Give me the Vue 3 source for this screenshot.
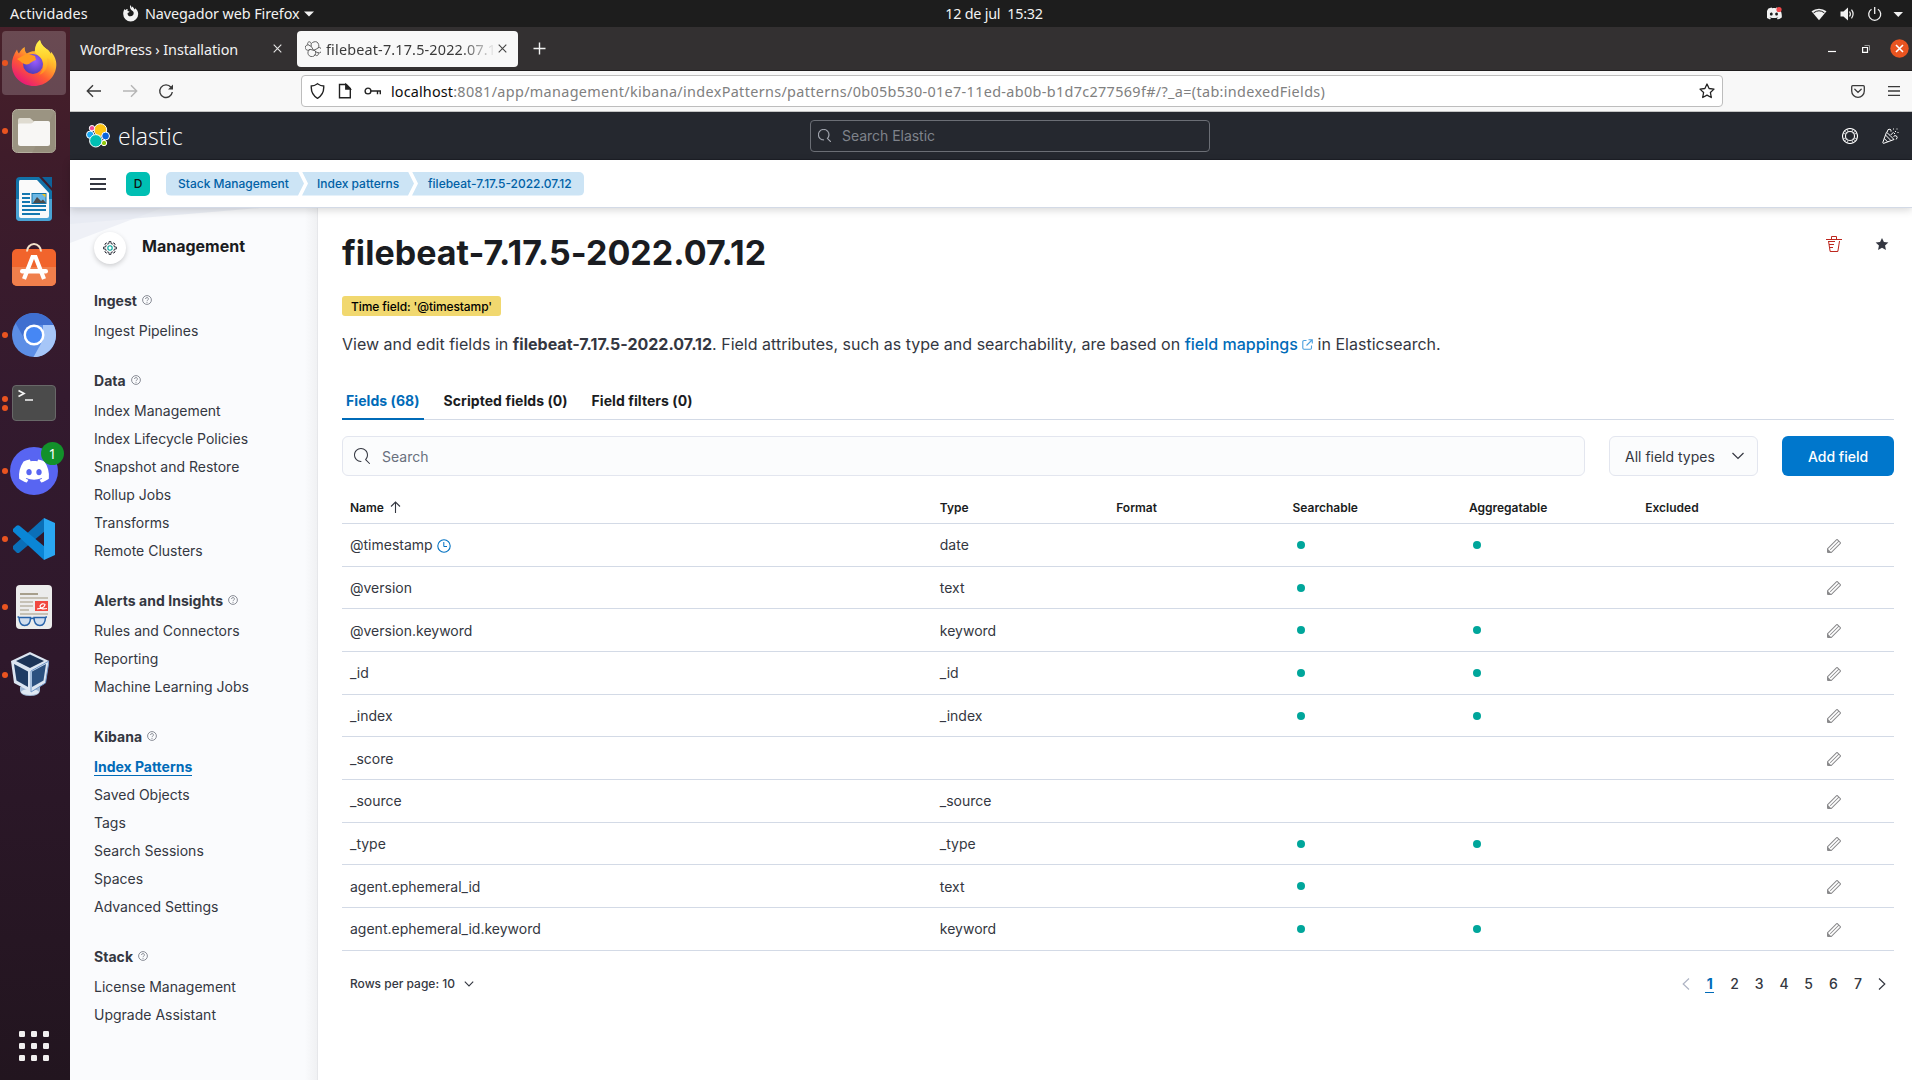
<script setup>
const navGroups = [
  { title: 'Ingest', items: ['Ingest Pipelines'] },
  {
    title: 'Data',
    items: ['Index Management', 'Index Lifecycle Policies', 'Snapshot and Restore', 'Rollup Jobs', 'Transforms', 'Remote Clusters'],
  },
  { title: 'Alerts and Insights', items: ['Rules and Connectors', 'Reporting', 'Machine Learning Jobs'] },
  {
    title: 'Kibana',
    items: ['Index Patterns', 'Saved Objects', 'Tags', 'Search Sessions', 'Spaces', 'Advanced Settings'],
  },
  { title: 'Stack', items: ['License Management', 'Upgrade Assistant'] },
]
const activeItem = 'Index Patterns'

const columns = ['Type', 'Format', 'Searchable', 'Aggregatable', 'Excluded']
const fields = [
  { name: '@timestamp', type: 'date', s: true, a: true, time: true },
  { name: '@version', type: 'text', s: true, a: false },
  { name: '@version.keyword', type: 'keyword', s: true, a: true },
  { name: '_id', type: '_id', s: true, a: true },
  { name: '_index', type: '_index', s: true, a: true },
  { name: '_score', type: '', s: false, a: false },
  { name: '_source', type: '_source', s: false, a: false },
  { name: '_type', type: '_type', s: true, a: true },
  { name: 'agent.ephemeral_id', type: 'text', s: true, a: false },
  { name: 'agent.ephemeral_id.keyword', type: 'keyword', s: true, a: true },
]
const pages = [1, 2, 3, 4, 5, 6, 7]

const searchPath =
  'M11.271 11.978l3.872 3.873a.502.502 0 00.708 0 .502.502 0 000-.708l-3.565-3.564c2.38-2.747 2.267-6.923-.342-9.532-2.73-2.73-7.17-2.73-9.898 0-2.728 2.729-2.728 7.17 0 9.9a6.955 6.955 0 004.949 2.05.5.5 0 000-1 5.96 5.96 0 01-4.242-1.757 6.01 6.01 0 010-8.486 6.004 6.004 0 018.484 0 6.01 6.01 0 010 8.486.5.5 0 00.034.738z'
const pencilPath =
  'M12.148 3.148L11 2l-9 9v3h3l9-9-1.144-1.144-8.002 7.998a.502.502 0 01-.708 0 .502.502 0 010-.708l8.002-7.998zM11 1c.256 0 .512.098.707.293l3 3a.999.999 0 010 1.414l-9 9A.997.997 0 015 15H2a1 1 0 01-1-1v-3c0-.265.105-.52.293-.707l9-9A.997.997 0 0111 1zM5 14H2v-3l3 3z'
const trashPath =
  'M11 3h5v1H0V3h5V1a1 1 0 011-1h4a1 1 0 011 1v2zm-7.056 8H7v1H4.1l.392 2.519c.042.269.254.458.493.458h6.03c.239 0 .451-.189.493-.458l1.498-9.576H14l-1.504 9.73c-.116.747-.74 1.304-1.481 1.304h-6.03c-.741 0-1.365-.557-1.481-1.304l-1.511-9.73H9V5.95H3.157L3.476 8H8v1H3.632l.312 2zM6 3h4V1H6v2z'
const discordPath =
  'M20.317 4.3698a19.7913 19.7913 0 00-4.8851-1.5152.0741.0741 0 00-.0785.0371c-.211.3753-.4447.8648-.6083 1.2495-1.8447-.2762-3.68-.2762-5.4868 0-.1636-.3933-.4058-.8742-.6177-1.2495a.077.077 0 00-.0785-.037 19.7363 19.7363 0 00-4.8852 1.515.0699.0699 0 00-.0321.0277C.5334 9.0458-.319 13.5799.0992 18.0578a.0824.0824 0 00.0312.0561c2.0528 1.5076 4.0413 2.4228 5.9929 3.0294a.0777.0777 0 00.0842-.0276c.4616-.6304.8731-1.2952 1.226-1.9942a.076.076 0 00-.0416-.1057c-.6528-.2476-1.2743-.5495-1.8722-.8923a.077.077 0 01-.0076-.1277c.1258-.0943.2517-.1923.3718-.2914a.0743.0743 0 01.0776-.0105c3.9278 1.7933 8.18 1.7933 12.0614 0a.0739.0739 0 01.0785.0095c.1202.099.246.1981.3728.2924a.077.077 0 01-.0066.1276 12.2986 12.2986 0 01-1.873.8914.0766.0766 0 00-.0407.1067c.3604.698.7719 1.3628 1.225 1.9932a.076.076 0 00.0842.0286c1.961-.6067 3.9495-1.5219 6.0023-3.0294a.077.077 0 00.0313-.0552c.5004-5.177-.8382-9.6739-3.5485-13.6604a.061.061 0 00-.0312-.0286zM8.02 15.3312c-1.1825 0-2.1569-1.0857-2.1569-2.419 0-1.3332.9555-2.4189 2.157-2.4189 1.2108 0 2.1757 1.0952 2.1568 2.419 0 1.3332-.9555 2.4189-2.1569 2.4189zm7.9748 0c-1.1825 0-2.1569-1.0857-2.1569-2.419 0-1.3332.9554-2.4189 2.1569-2.4189 1.2108 0 2.1757 1.0952 2.1568 2.419 0 1.3332-.946 2.4189-2.1568 2.4189Z'
</script>

<template>
  <div class="screen">
    <header class="topbar">
      <div class="topbar-left">
        <span class="t-act">Actividades</span>
        <svg class="t-fox" width="17" height="17" viewBox="0 0 17 17">
          <path fill="#f2f2f2" d="M8.2 0c.9.8 1.4 1.9 1.4 3 .4-.5.5-1 .4-1.6 1.3.7 2 1.8 2.3 3 .5-.2.9-.7 1-1.2 1.800 1.400 2.900 3.400 2.900 5.700a7.500 7.500 0 0 1-15 0C1.200 6.900 1.700 5.200 2.600 4c.2.500.5.900.9 1.100C4 4.400 4.900 4 5.700 4.100c-.4.700-.3 1.300 0 1.800l1.900.5c-.2.900-1.200 1.200-2 1.500-.3 2 1 3.400 2.900 3.400 2 0 3.300-1.500 3.200-3.300-.1-1.200-.8-2-1.800-2.600C8.400 4.400 7.500 2.600 8.200 0z" />
        </svg>
        <span class="t-app">Navegador web Firefox</span>
        <svg width="10" height="6" viewBox="0 0 10 6"><path d="M0 .5h10L5 5.500z" fill="#f2f2f2" /></svg>
      </div>
      <span class="t-clock">12 de jul&nbsp; 15:32</span>
      <svg class="t-tray" width="142" height="20" viewBox="0 0 142 20">
        <g transform="translate(-1 1.500) scale(.66)"><path :d="discordPath" fill="#f2f2f2" /></g>
        <circle cx="12" cy="5.500" r="2.600" fill="#f0474a" />
        <path d="M44.500 7.300a12 12 0 0 1 15 0L52 16.300z" fill="#f2f2f2" />
        <path d="M46.600 8.800a9 9 0 0 1 10.800 0" stroke="#1d1d1d" stroke-width="1" fill="none" />
        <path d="M73.500 7.500h3L81 3.500v13l-4.500-4h-3z" fill="#f2f2f2" />
        <path d="M82.500 7.500q1.800 2.500 0 5M84.500 5.700q3.200 4.300 0 8.600" fill="none" stroke="#f2f2f2" stroke-width="1.200" />
        <path d="M104.500 5.200a6 6 0 1 0 6.400 0M107.700 3v7" fill="none" stroke="#f2f2f2" stroke-width="1.300" />
        <path d="M126.500 8h9.500l-4.750 5z" fill="#f2f2f2" />
      </svg>
    </header>

    <div class="desktop">
      <aside class="dock">
        <div class="slot">
          <div class="tile">
            <svg width="46" height="48" viewBox="0 0 46 48">
              <defs>
                <linearGradient id="ffBody" x1=".85" y1=".1" x2=".25" y2="1">
                  <stop offset="0" stop-color="#fff14a" /><stop offset=".32" stop-color="#ffb22c" />
                  <stop offset=".62" stop-color="#ff5a33" /><stop offset="1" stop-color="#e6127f" />
                </linearGradient>
                <radialGradient id="ffGlobe" cx=".6" cy=".35" r=".7">
                  <stop offset="0" stop-color="#9a5cff" /><stop offset="1" stop-color="#4a3bb4" />
                </radialGradient>
                <linearGradient id="ffTail" x1=".5" y1="0" x2=".5" y2="1">
                  <stop offset="0" stop-color="#fff44f" /><stop offset=".5" stop-color="#ffd02d" /><stop offset="1" stop-color="#ff8a1f" />
                </linearGradient>
              </defs>
              <path fill="url(#ffBody)" d="M29 1c1 5 5 8 8 10 1.500 1.500 2.300 3 2.800 4.500.3-1 .2-2 0-3C44 17 45.500 22 45.300 26 45 38 35 47 23 47S1 38 .8 26C.8 20 3 15 6 10.500c.3 1.500 1 3 2 4C9 12 11 9.500 13.800 8c-.3 2.500.4 5 2 6.600C20 12 22 12.500 24 12c0-4 2-8 5-11z" />
              <circle cx="22" cy="25" r="10" fill="url(#ffGlobe)" />
              <path fill="url(#ffTail)" d="M29 1c1 5 5 8 8 10 5 5 6 11 5 17-1-5-3-8-6-9 2 9-2 15-8 17 5-5 6-12 2-17-3-4-7-4-6-9 .5-4 2-7 5-9z" />
              <path fill="#ff9a22" d="M6 20c4-2 7-4 10-5.500 2 1 5 1.500 8 2.500l1 4c-3 1-5 2-7 4-3 1-6 0-9-3z" />
            </svg>
          </div>
          <i class="dot"></i>
        </div>
        <div class="slot">
          <svg width="44" height="44" viewBox="0 0 44 44">
            <rect x=".5" y=".5" width="43" height="43" rx="5" fill="#9b9482" stroke="#b5af9f" />
            <path d="M44 0v39a5 5 0 0 1-5 5H20z" fill="#8c8573" opacity=".35" />
            <path d="M6 11q0-2 2-2h10l4 3.500h14q2 0 2 2V20H6z" fill="#dfdbd0" />
            <rect x="6" y="15" width="32" height="22" rx="2.500" fill="#f8f7f5" />
            <path d="M6 18v-2q0-1.500 1.500-1.500h11q1.500 0 2.500-1l1.500-1.500H36q2 0 2 2v5z" fill="#f8f7f5" />
          </svg>
          <i class="dot"></i>
        </div>
        <div class="slot">
          <svg width="36" height="44" viewBox="0 0 36 44">
            <path d="M4 0h19l13 14v26a4 4 0 0 1-4 4H4a4 4 0 0 1-4-4V4a4 4 0 0 1 4-4z" fill="#1272a8" />
            <path d="M0 22h36v18a4 4 0 0 1-4 4H4a4 4 0 0 1-4-4z" fill="#4aa3d4" />
            <path d="M4 3h17l12 13v23q0 2-2 2H5q-2 0-2-2V5q0-2 1-2z" fill="#fafafa" />
            <path d="M26 0h10v11z" fill="#0e629a" />
            <path d="M6 17h8M6 21h8M6 25h8M6 29h24M6 33h24M6 37h18" stroke="#1578b0" stroke-width="2" />
            <rect x="16" y="16.500" width="14" height="10" fill="#6cb7e4" stroke="#1272a8" />
            <path d="M17 26l4-6 4 4 2-1.500 3 3.500z" fill="#4b4b4b" /><path d="M26 17h3.500v3.500z" fill="#f5c518" />
          </svg>
        </div>
        <div class="slot">
          <svg class="store" width="44" height="44" viewBox="0 0 44 44">
            <rect y="7" width="44" height="37" rx="5" fill="#f1642c" />
            <path d="M0 25h44v14a5 5 0 0 1-5 5H5a5 5 0 0 1-5-5z" fill="#f07f4c" />
            <path d="M15 9.500a7 7.500 0 0 1 14 0" fill="none" stroke="#f4e3cb" stroke-width="2" />
            <path d="M12 37l8.500-22h3L32 37" fill="none" stroke="#fff" stroke-width="4.200" />
            <rect x="8" y="27" width="28" height="4.500" rx="2.200" fill="#fff" />
          </svg>
        </div>
        <div class="slot">
          <svg width="44" height="44" viewBox="0 0 44 44">
            <circle cx="22" cy="22" r="22" fill="#5c8ee6" />
            <path d="M22 12h19.600A22 22 0 0 0 3.500 10.100L13 27z" fill="#3f6fd0" />
            <path d="M31 12h10.600A22 22 0 0 1 21.500 44L31 27z" fill="#a6c6f8" />
            <circle cx="22" cy="22" r="10.500" fill="#fff" /><circle cx="22" cy="22" r="8" fill="#4687f4" />
          </svg>
          <i class="dot"></i>
        </div>
        <div class="slot">
          <svg width="44" height="36" viewBox="0 0 44 36">
            <rect x=".5" y=".5" width="43" height="35" rx="3.500" fill="#4b4b4b" stroke="#686868" />
            <path d="M6.500 5.500l5.500 3-5.500 3M13 15h8" fill="none" stroke="#f5f5f5" stroke-width="1.700" />
          </svg>
          <i class="dot dot-up"></i><i class="dot dot-down"></i>
        </div>
        <div class="slot">
          <svg width="48" height="48" viewBox="0 0 48 48">
            <circle cx="24" cy="24" r="24" fill="#5865f2" />
            <g transform="translate(9 9) scale(1.250)"><path :d="discordPath" fill="#fff" /></g>
          </svg>
          <i class="dot"></i><span class="badge">1</span>
        </div>
        <div class="slot">
          <svg width="42" height="42" viewBox="0 0 42 42">
            <path d="M31 0L0 28l0 3 3.500 3.500q1.500 1 3 0L32 13z" fill="#0a6fb8" />
            <path d="M31 42L0 13.500V11l3.500-3.200q1.500-1 3 0L32 29z" fill="#0a86d6" />
            <path d="M31 0l11 5v32l-11 5z" fill="#2aa7f2" />
          </svg>
          <i class="dot"></i>
        </div>
        <div class="slot">
          <svg width="36" height="44" viewBox="0 0 36 44">
            <rect width="36" height="44" rx="4" fill="#ececec" />
            <path d="M4 9h18" stroke="#a79f8c" stroke-width="2" />
            <path d="M4 13h28M4 17h13M4 21h13M4 25h9M4 29h28" stroke="#b9b3a3" stroke-width="1.700" />
            <rect x="19" y="16" width="13" height="10" fill="#f1483f" />
            <path d="M21 24q8-1 8-4.500-3-2-5 1.500 0 4 7 2.500" fill="none" stroke="#fff" stroke-width="1.200" />
            <path d="M3 32.500h11.500q0 8-6 8-5 0-5.500-8zM18 32.500h11.500q-.5 8-5.500 8-6 0-6-8zM14.500 34q1.800-1.500 3.500 0M1.500 32H3M29.500 32H31" fill="#c4d7ef" fill-opacity=".7" stroke="#2862a8" stroke-width="1.500" />
          </svg>
          <i class="dot"></i>
        </div>
        <div class="slot">
          <svg class="vbox" width="38" height="46" viewBox="0 0 38 46">
            <path d="M9 36l10-3 10 3v4q-1 5-10 5T9 40z" fill="#9fb6d2" /><ellipse cx="19" cy="41" rx="9" ry="3" fill="#dfe9f4" />
            <path d="M19 1l19 9-3.500 22L20 41 3 32 0 10z" fill="#dbe5f1" />
            <path d="M19 3.500l14 6.500-14 7-14-7z" fill="#1c3558" />
            <path d="M3 13l14 7.500v15.500L5.500 29.500z" fill="#1f3c63" />
            <path d="M35 13l-14 7.500v15.500l11.500-6.500z" fill="#2b5180" />
            <path d="M38 10l-3.500 22L20 41V20z" fill="none" stroke="#6f97c9" />
          </svg>
          <i class="dot"></i>
        </div>
        <svg class="apps" width="30" height="30" viewBox="0 0 30 30">
          <g fill="#f2f0f0">
            <template v-for="r in 3" :key="r">
              <rect v-for="c in 3" :key="c" :x="(c - 1) * 12" :y="(r - 1) * 12" width="6" height="6" rx="1.200" />
            </template>
          </g>
        </svg>
      </aside>

      <section class="window">
        <div class="tabbar">
          <div class="tab">
            <span class="tab1-text">WordPress › Installation</span>
            <svg width="9" height="9" viewBox="0 0 9 9"><path d="M.7.7l7.600 7.600M8.300.7L.7 8.300" stroke="#e6e6e6" stroke-width="1.100" /></svg>
          </div>
          <div class="tab on">
            <svg width="16" height="16" viewBox="0 0 16 16" fill="none" stroke="#555" stroke-width=".9">
              <path d="M6.300 5.500A3.800 3.800 0 1 1 11 8.200L8.600 9.300zM10 9.500A3.900 3.900 0 1 1 5 8.300l3.600 1z" />
              <path d="M5 8.300A2.700 2.700 0 1 1 3.300 3.900l3 1.600M3.300 3.900A1.700 1.700 0 1 1 6 2.500M12.500 7a2.700 2.700 0 1 1 .3 4.600L10 10.500M12.800 11.600A1.700 1.700 0 1 1 10 13" />
            </svg>
            <span class="tab2-text">filebeat-7.17.5-2022.07.12</span>
            <svg class="tab-x" width="9" height="9" viewBox="0 0 9 9"><path d="M.7.7l7.600 7.600M8.300.7L.7 8.300" stroke="#444" stroke-width="1.100" /></svg>
          </div>
          <svg class="plus" width="13" height="13" viewBox="0 0 13 13"><path d="M6.500.5v12M.5 6.500h12" stroke="#f2f2f2" stroke-width="1.400" /></svg>
          <div class="winbtns">
            <svg width="8" height="14" viewBox="0 0 8 14"><path d="M0 9.500h8" stroke="#fff" stroke-width="1.200" /></svg>
            <svg width="8" height="8" viewBox="0 0 8 8"><path d="M.6 2.500h4.900v4.900H.6z" fill="none" stroke="#fff" stroke-width="1.200" /><path d="M2.500.5h5v5" fill="none" stroke="#9a9a9a" /></svg>
            <svg width="19" height="19" viewBox="0 0 19 19"><circle cx="9.500" cy="9.500" r="9.200" fill="#e95420" /><path d="M6 6l7 7M13 6l-7 7" stroke="#fff" stroke-width="1.600" /></svg>
          </div>
        </div>

        <div class="toolbar">
          <svg class="navbtns" width="90" height="16" viewBox="0 0 90 16" fill="none" stroke-width="1.400">
            <path d="M15 8H1.500M7 2.300L1.300 8 7 13.700" stroke="#3a3a3a" />
            <path d="M37 8h13.500M45 2.300L50.700 8 45 13.700" stroke="#b5b5b5" />
            <path d="M85 4.300A6.300 6.300 0 1 0 86.300 9" stroke="#3a3a3a" /><path d="M87 1.500v5h-5z" fill="#3a3a3a" stroke="none" />
          </svg>
          <div class="urlbar">
            <svg width="72" height="18" viewBox="0 0 72 18" fill="none" stroke="#222" stroke-width="1.400">
              <path d="M7.500 1.700q3.200 2.300 6.200 2.300.6 8.500-6.200 12.300Q.7 12.500 1.300 4q3 0 6.200-2.300z" />
              <path d="M29.500 2.500h6.800l4 4v9.300H29.500z" /><path d="M35.800 2.500V7h4.500z" fill="#222" />
              <circle cx="58" cy="9" r="2.900" /><path d="M61 9h10M67.500 9v3.200M70.300 9v3.200" />
            </svg>
            <span class="url"><b>localhost</b>:8081/app/management/kibana/indexPatterns/patterns/0b05b530-01e7-11ed-ab0b-b1d7c277569f#/?_a=(tab:indexedFields)</span>
            <svg class="bookmark" width="16" height="16" viewBox="0 0 16 16"><path d="M8 1l2.100 4.500 4.900.6-3.600 3.400.9 5L8 12.100 3.700 14.500l.9-5L1 6.100l4.900-.6z" fill="none" stroke="#222" stroke-width="1.300" stroke-linejoin="round" /></svg>
          </div>
          <svg class="pocket" width="14" height="13" viewBox="0 0 14 13" fill="none" stroke="#3a3a3a" stroke-width="1.300"><path d="M1.700.7h10.600q1 0 1 1V6a6.300 6.300 0 0 1-12.600 0V1.700q0-1 1-1z" /><path d="M3.800 4.300L7 7.400l3.200-3.100" stroke-linecap="round" /></svg>
          <svg class="menu" width="12" height="10" viewBox="0 0 12 10"><path d="M0 .7h12M0 5h12M0 9.300h12" stroke="#3a3a3a" stroke-width="1.300" /></svg>
        </div>

        <div class="elastic-bar">
          <svg width="24" height="25" viewBox="0 0 24 25" stroke="#fff" stroke-width="1">
            <circle cx="14.400" cy="7" r="6.300" fill="#fec514" /><circle cx="6" cy="5.200" r="2.700" fill="#f04e98" />
            <circle cx="4.200" cy="11.700" r="3.700" fill="#1ba9f5" /><circle cx="19.600" cy="13" r="3.900" fill="#0b64dd" />
            <circle cx="18" cy="20" r="2.700" fill="#93c90e" /><circle cx="9.800" cy="17.800" r="6.200" fill="#00bfb3" />
          </svg>
          <span class="wordmark">elastic</span>
          <div class="gsearch">
            <svg width="13" height="13" viewBox="0 0 16 16"><path :d="searchPath" fill="#b0b4bd" stroke="#b0b4bd" stroke-width=".3" /></svg>
            <span>Search Elastic</span>
          </div>
          <svg class="help" width="16" height="16" viewBox="0 0 16 16" fill="none" stroke="#fff">
            <circle cx="8" cy="8" r="7.500" stroke-width="1.100" /><circle cx="8" cy="8" r="4.500" stroke-width="1.100" />
            <path d="M5.300 1.200L6 4M2.700 3.200l2.600 2M1.200 5.300L4 6M10.700 1.200L10 4M13.300 3.200l-2.600 2M14.800 5.300L12 6M5.300 14.800L6 12M2.700 12.800l2.600-2M1.200 10.700L4 10M10.700 14.800L10 12M13.300 12.800l-2.600-2M14.800 10.700L12 10" stroke-width=".7" />
          </svg>
          <svg class="cheer" width="17" height="16" viewBox="0 0 17 16" fill="none" stroke="#fff">
            <path d="M4.500 4.200L.8 14.500q0 1 1 .8L12 11.500M4.500 4.200q3.500 3 7.500 7.300M3.500 7l5.500 5.600M2.300 10.500l3.500 3.600M5.200 4Q5.500.6 8 1.200q1.500.6 1 2.400M11.500 8.500q1.500-1.500 3-.5 1.500 1.500-.3 3.400M8.500 7.200l3-3" />
            <path d="M11 1h1M14.500 1h1M13 3.500h1M12 5.500h1M15.500 4.500h1" />
          </svg>
        </div>

        <div class="crumbbar">
          <svg width="16" height="12" viewBox="0 0 16 12"><path d="M0 1h16M0 6h16M0 11h16" stroke="#343741" stroke-width="1.800" /></svg>
          <span class="space">D</span>
          <nav class="crumbs">
            <span class="crumb c1">Stack Management</span>
            <span class="crumb c2">Index patterns</span>
            <span class="crumb c3">filebeat-7.17.5-2022.07.12</span>
          </nav>
        </div>

        <div class="page">
          <aside class="side">
            <svg class="side-bg" width="247" height="60" viewBox="0 0 247 60">
              <path d="M0 0h92L0 35z" fill="#eef0f6" /><path d="M0 0h190L0 16z" fill="#e6e9f2" fill-opacity=".75" />
            </svg>
            <div class="side-head">
              <span class="gear">
                <svg width="16" height="16" viewBox="0 0 16 16" fill="none">
                  <path stroke="#343741" d="M7 .6h2v1.900l1.400.6 1.400-1.300 1.400 1.400-1.300 1.400.6 1.400h1.900v2h-1.900l-.6 1.400 1.300 1.400-1.400 1.400-1.400-1.300-1.400.6v1.900H7v-1.900l-1.400-.6-1.400 1.300-1.400-1.400 1.300-1.400L3.500 8H1.600V6h1.900l.6-1.400-1.300-1.400 1.400-1.400 1.400 1.300L7 2.500z" transform="translate(0 1)" />
                  <circle cx="8" cy="8" r="2.200" stroke="#00a69b" stroke-width="1.100" />
                </svg>
              </span>
              <h2>Management</h2>
            </div>
            <div v-for="g in navGroups" :key="g.title" class="group">
              <h3>
                {{ g.title }}
                <svg width="10" height="10" viewBox="0 0 10 10" fill="none" stroke="#7c808a" stroke-width=".9"><circle cx="5" cy="5" r="4.400" /><path d="M3.600 4a1.400 1.400 0 1 1 2 1.200Q5 5.500 5 6.200M5 7v.9" /></svg>
              </h3>
              <a v-for="i in g.items" :key="i" :class="{ active: i === activeItem }"><span>{{ i }}</span></a>
            </div>
          </aside>

          <main class="main">
            <div class="title-row">
              <h1>filebeat-7.17.5-2022.07.12</h1>
              <svg class="trash" width="16" height="16" viewBox="0 0 16 16"><path :d="trashPath" fill="#bd271e" /></svg>
              <svg width="14" height="14" viewBox="0 0 16 16"><path d="M8 1l2.200 4.700 5.100.6-3.800 3.500 1 5.100L8 12.400l-4.500 2.500 1-5.100L.7 6.300l5.100-.6z" fill="#343741" /></svg>
            </div>
            <span class="time-badge">Time field: '@timestamp'</span>
            <p class="desc">
              View and edit fields in <b>filebeat-7.17.5-2022.07.12</b>. Field attributes, such as type and searchability, are based on
              <a>field mappings <svg width="11" height="11" viewBox="0 0 11 11" fill="none" stroke="#4a9fdd" stroke-width="1.100"><path d="M4.500 1.500H2q-1.200 0-1.200 1.200V9q0 1.200 1.200 1.200h6.300q1.200 0 1.200-1.200V6.500M6.500.7h3.800v3.800M10 1L4.500 6.500" /></svg></a>
              in Elasticsearch.
            </p>
            <div class="tabs">
              <span class="sel">Fields (68)</span><span>Scripted fields (0)</span><span>Field filters (0)</span>
            </div>
            <div class="controls">
              <div class="search">
                <svg width="16" height="16" viewBox="0 0 16 16"><path :d="searchPath" fill="#343741" /></svg>
                <span>Search</span>
              </div>
              <div class="select">
                <span>All field types</span>
                <svg width="12" height="8" viewBox="0 0 12 8"><path d="M.5 1l5.500 5.500L11.500 1" fill="none" stroke="#343741" stroke-width="1.200" /></svg>
              </div>
              <div class="add">Add field</div>
            </div>
            <div class="thead">
              <span>Name <svg width="11" height="12" viewBox="0 0 11 12"><path d="M5.500 12V1M1 5.500L5.500 1 10 5.500" fill="none" stroke="#343741" stroke-width="1.100" /></svg></span>
              <span v-for="c in columns" :key="c">{{ c }}</span>
            </div>
            <div class="tbody">
              <div v-for="f in fields" :key="f.name" class="row">
                <span>{{ f.name }}<svg v-if="f.time" class="clock" width="14" height="14" viewBox="0 0 14 14" fill="none" stroke="#0071c2"><circle cx="7" cy="7" r="6.200" stroke-width="1.100" /><path d="M6.800 3v4.500H10" /></svg></span>
                <span>{{ f.type }}</span>
                <span></span>
                <span><i v-if="f.s" class="ok"></i></span>
                <span><i v-if="f.a" class="ok"></i></span>
                <span></span>
                <span class="edit"><svg width="16" height="16" viewBox="0 0 16 16"><path :d="pencilPath" fill="#8a8a8c" /></svg></span>
              </div>
            </div>
            <div class="pager">
              <span class="rpp">Rows per page: 10</span>
              <svg width="10" height="6" viewBox="0 0 10 6"><path d="M.8.700L5 5 9.200.700" fill="none" stroke="#343741" stroke-width="1.100" /></svg>
              <div class="pages">
                <svg width="8" height="12" viewBox="0 0 8 12"><path d="M7 .5L1.200 6 7 11.500" fill="none" stroke="#aeb4c4" stroke-width="1.200" /></svg>
                <span v-for="p in pages" :key="p" :class="{ cur: p === 1 }">{{ p }}</span>
                <svg width="8" height="12" viewBox="0 0 8 12"><path d="M1 .5L6.800 6 1 11.500" fill="none" stroke="#343741" stroke-width="1.200" /></svg>
              </div>
            </div>
          </main>
        </div>
      </section>
    </div>
  </div>
</template>

<style>
body { margin: 0; overflow: hidden; }
</style>

<style scoped>
* { box-sizing: border-box; }
.screen { width: 1912px; height: 1080px; display: flex; flex-direction: column; overflow: hidden; font-family: Inter, "Liberation Sans", sans-serif; color: #343741; white-space: nowrap; }
svg { display: block; flex: none; }

/* desktop top bar */
.topbar { height: 27px; flex: none; background: #1d1d1d; color: #f2f2f2; display: grid; grid-template-columns: 1fr auto 1fr; align-items: center; font: 14.400px/26px "Noto Sans", "Open Sans", sans-serif; }
.topbar-left { display: flex; align-items: center; padding-left: 10px; }
.t-act { width: 112px; letter-spacing: .08px; }
.t-app { width: 155px; margin: 0 4px 0 6px; letter-spacing: -.1px; }
.t-clock { letter-spacing: -.25px; padding-left: 76px; }
.t-tray { justify-self: end; margin-right: 3px; }

.desktop { flex: 1; display: flex; min-height: 0; }

/* launcher */
.dock { width: 70px; flex: none; display: flex; flex-direction: column; align-items: center; padding: 2px 2px 19px 0; background: linear-gradient(#48202a 0, #3f1c2a 12%, #331a2e 35%, #2e182b 60%, #22151f 100%); }
.slot { width: 68px; height: 68px; display: flex; align-items: center; justify-content: center; position: relative; flex: none; }
.tile { width: 60px; height: 64px; border-radius: 4px; background: rgba(255, 255, 255, .19); display: flex; align-items: center; justify-content: center; width: 64px; }
.dot { position: absolute; left: 2px; top: 31px; width: 6px; height: 6px; border-radius: 50%; background: #e95420; }
.dot-up { top: 27px; }
.dot-down { top: 36px; }
.badge { position: absolute; left: 41px; top: 5px; width: 23px; height: 23px; border-radius: 50%; background: #12912a; color: #fff; font: 14px/23px "Noto Sans", sans-serif; text-align: center; }
.store { margin-top: -6px; }
.vbox { margin: -2px 0 0 -8px; }
.apps { margin-top: auto; }

/* browser chrome */
.window { flex: 1; min-width: 0; display: flex; flex-direction: column; background: #fff; }
.tabbar { height: 44px; flex: none; background: #333031; border-bottom: 1px solid #1f1d1e; display: flex; align-items: center; font: 14.400px/20px "Noto Sans", "Open Sans", sans-serif; color: #f2f2f2; }
.tab { display: flex; align-items: center; width: 227px; padding-left: 10px; }
.tab1-text { width: 193px; padding-top: 2px; letter-spacing: -.1px; }
.tab.on { width: 221px; height: 36px; border-radius: 4px; background: #f8f8f8; color: #3a3a3a; padding-left: 8px; }
.tab2-text { width: 172px; padding-top: 2px; overflow: hidden; margin-left: 5px; letter-spacing: .17px; -webkit-mask-image: linear-gradient(90deg, #000 78%, transparent 99%); mask-image: linear-gradient(90deg, #000 78%, transparent 99%); }
.plus { margin-left: 15px; }
.winbtns { margin-left: auto; display: flex; align-items: center; gap: 26px; padding-right: 3px; }
.winbtns svg:last-child { margin-left: -6px; }
.toolbar { height: 41px; flex: none; background: #f8f8f8; border-bottom: 1px solid #c4c4c4; display: flex; align-items: center; padding-left: 16px; }
.navbtns { margin-right: 125px; }
.urlbar { width: 1422px; height: 32px; background: #fff; border: 1px solid #bdbdbd; border-radius: 4px; display: flex; align-items: center; padding: 0 7px 0 8px; font: 14.400px/20px "Noto Sans", "Open Sans", sans-serif; color: #808080; }
.url { margin-left: 9px; padding-top: 1px; letter-spacing: .34px; }
.url b { font-weight: 400; color: #0c0c0c; letter-spacing: .15px; }
.bookmark { margin-left: auto; }
.pocket { margin-left: 128px; }
.menu { margin-left: 23px; }

/* kibana header */
.elastic-bar { height: 48px; flex: none; background: #25282f; display: flex; align-items: center; padding-left: 16px; border-bottom: 1px solid #1d1f26; }
.wordmark { width: 65px; margin-left: 8px; color: #fff; font: 23px/30px "Open Sans", "Noto Sans", sans-serif; font-weight: 300; letter-spacing: 0; }
.gsearch { width: 400px; height: 32px; margin-left: 627px; border: 1px solid #6b6e75; border-radius: 4px; display: flex; align-items: center; padding-left: 7px; gap: 11px; font-size: 14px; color: #7f838b; }
.gsearch span { letter-spacing: -.03px; }
.help { margin-left: 632px; }
.cheer { margin-left: 24px; }
.crumbbar { height: 48px; flex: none; background: #fff; border-bottom: 1px solid #d3dae6; display: flex; align-items: center; padding-left: 20px; box-shadow: 0 2px 8px rgba(0, 0, 0, .16); position: relative; z-index: 3; }
.space { width: 24px; height: 24px; margin: 0 16px 0 20px; border-radius: 5px; background: #00bfb3; color: #111; font: 500 12px/24px Inter, sans-serif; text-align: center; }
.crumbs { display: flex; font: 500 12px/24px Inter, sans-serif; color: #0061a6; }
.crumb { height: 24px; background: #cce4f5; }
.c1 { width: 138px; padding-left: 12px; border-radius: 5px 0 0 5px; clip-path: polygon(0 0, 132px 0, 100% 50%, 132px 100%, 0 100%); }
.c2 { width: 112px; margin-left: -2px; padding-left: 15px; clip-path: polygon(0 0, 106px 0, 100% 50%, 106px 100%, 0 100%, 6px 50%); }
.c3 { width: 172px; margin-left: -2px; padding-left: 16px; border-radius: 0 5px 5px 0; clip-path: polygon(0 0, 100% 0, 100% 100%, 0 100%, 6px 50%); }

/* side navigation */
.page { flex: 1; display: flex; min-height: 0; }
.side { width: 248px; flex: none; background: linear-gradient(90deg, #fafbfd 95%, #f0f1f3); border-right: 1px solid #e6e7ea; padding: 24px 0 0 24px; position: relative; }
.side-bg { position: absolute; left: 0; top: 0; }
.side-head { display: flex; align-items: flex-start; height: 55px; position: relative; }
.gear { width: 32px; height: 32px; border-radius: 50%; background: #fff; box-shadow: 0 2px 5px rgba(0, 0, 0, .18); display: flex; align-items: center; justify-content: center; }
h2 { margin: 2px 0 0 16px; font: 700 16px/24px Inter, sans-serif; color: #1a1c21; }
.group { margin-bottom: 22px; }
h3 { margin: 0; height: 30px; padding-bottom: 2px; font: 700 14px/28px Inter, sans-serif; letter-spacing: .04px; display: flex; align-items: center; gap: 5px; }
h3 svg { margin-top: -2px; }
.group a { display: flex; height: 28px; align-items: center; font-size: 14px; line-height: 18px; color: #343741; }
.group .active { color: #006bb8; font-weight: 700; }
.active span { border-bottom: 1px solid #006bb8; height: 18px; line-height: 18px; }

/* main panel */
.main { flex: 1; min-width: 0; padding: 21px 18px 0 24px; display: flex; flex-direction: column; align-items: stretch; }
.title-row { display: flex; align-items: flex-start; height: 67px; padding-right: 5px; }
h1 { margin: 0; flex: 1; font: 700 34px/48px Inter, sans-serif; letter-spacing: .05px; color: #1a1c21; }
.trash { margin-right: 33px; }
.title-row svg { margin-top: 8px; }
.title-row .trash { margin-top: 7px; }
.time-badge { align-self: flex-start; height: 20px; padding: 0 9px; border-radius: 3px; background: #f1d86f; color: #000; font: 500 12px/21px Inter, sans-serif; letter-spacing: -.09px; }
.desc { margin: 16px 0 0; font-size: 16px; line-height: 24px; letter-spacing: .010px; }
.desc a { color: #006bb8; font-weight: 500; }
.desc svg { display: inline-block; }
.tabs { display: flex; gap: 16px; height: 40px; margin-top: 24px; border-bottom: 1px solid #d3dae6; font: 700 14px/42px Inter, sans-serif; letter-spacing: .06px; color: #1a1c21; }
.tabs span { padding: 0 4px; height: 40px; }
.tabs .sel { color: #006bb8; border-bottom: 2px solid #006bb8; }
.controls { display: flex; margin-top: 16px; height: 40px; font-size: 14px; flex: none; }
.search, .select { border: 1px solid #e3e6ef; border-radius: 6px; background: #fbfcfd; display: flex; align-items: center; }
.search { width: 1243px; padding-left: 11px; gap: 12px; color: #69707d; }
.select { width: 149px; margin: 0 24px; padding: 0 13px 0 15px; justify-content: space-between; }
.add { width: 112px; border-radius: 6px; background: #0077cc; color: #fff; text-align: center; line-height: 42px; font-weight: 500; }
.thead, .row { display: grid; grid-template-columns: 589.800px repeat(5, 176.360px) 1fr; }
.thead { margin-top: 15px; height: 33px; border-bottom: 1px solid #d3dae6; font: 600 12px/30px Inter, sans-serif; color: #1a1c21; flex: none; }
.thead span, .row span { padding-left: 8px; display: flex; align-items: center; }
.thead span { padding-top: 1px; }
.thead svg { margin: -1px 0 0 6px; }
.tbody { margin-top: .1px; flex: none; }
.row { height: 42.667px; border-bottom: 1px solid #d3dae6; font-size: 14px; }
.clock { margin: 3px 0 0 4px; }
.ok { width: 8px; height: 8px; border-radius: 50%; background: #00a69b; margin-left: 4px; }
.row .edit { padding: 1.500px 0 0 12px; }
.pager { display: flex; align-items: center; height: 66px; padding-left: 8px; }
.rpp { font: 500 12px/20px Inter, sans-serif; margin-right: 9px; }
.pages { margin-left: auto; display: flex; align-items: center; font: 500 14px/17px Inter, sans-serif; padding-right: 8px; }
.pages span { width: 9px; margin-right: 15.700px; text-align: center; }
.pages svg:first-child { margin-right: 15px; }
.pages svg:last-child { margin-left: -.200px; }
.cur { color: #006bb8; font-weight: 700; border-bottom: 1px solid #006bb8; }
</style>
